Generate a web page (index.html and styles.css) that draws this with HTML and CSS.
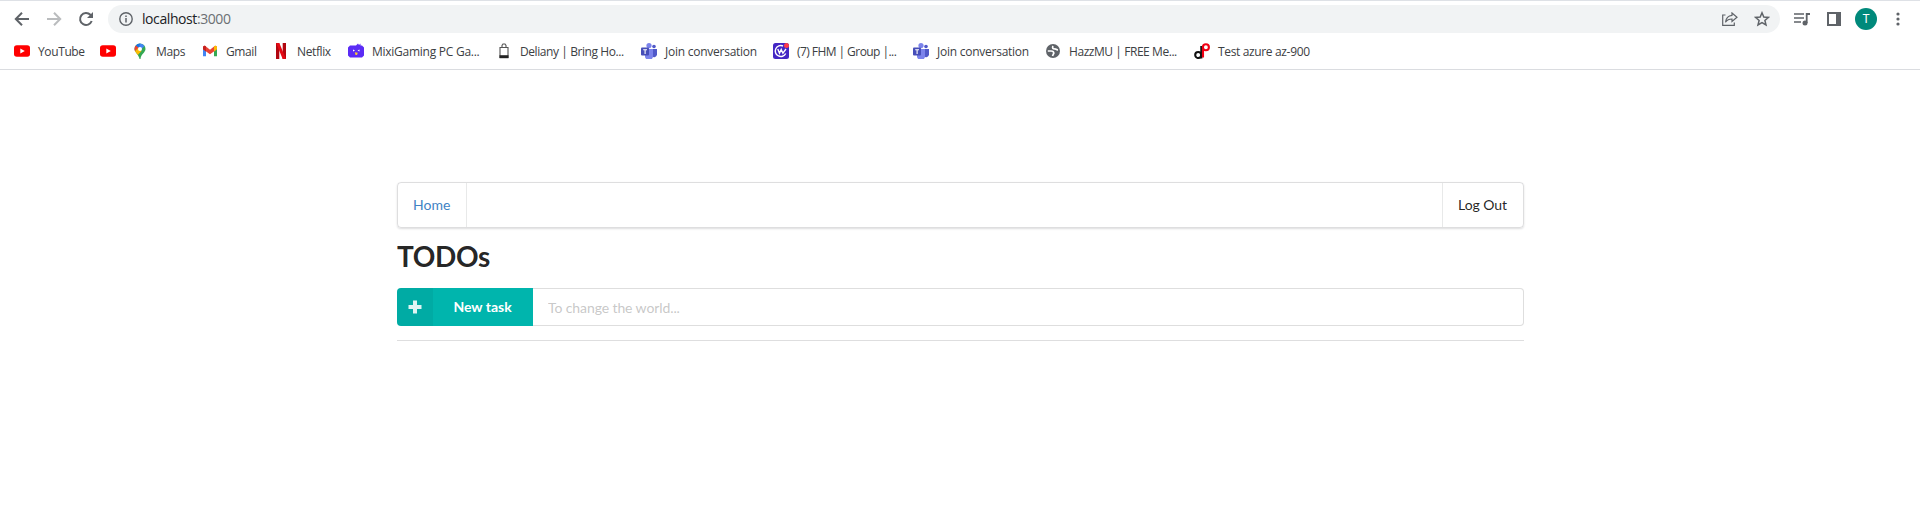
FILE: index.html
```html
<!DOCTYPE html>
<html lang="en">
<head>
<meta charset="utf-8">
<title>TODOs</title>
<link rel="stylesheet" href="styles.css">
</head>
<body>
<header class="browser">
  <div class="toolbar">
    <svg class="nav-icon" viewBox="0 0 16 16"><path d="M15 8H2M8 1.8 1.8 8 8 14.2" fill="none" stroke="#5f6368" stroke-width="2"/></svg>
    <svg class="nav-icon" viewBox="0 0 16 16"><path d="M1 8h13M8 1.8 14.2 8 8 14.2" fill="none" stroke="#babcbe" stroke-width="2"/></svg>
    <svg class="nav-icon" viewBox="0 0 16 16"><path d="M13.7 10A6 6 0 1 1 12.4 3.8L14 5.5" fill="none" stroke="#5f6368" stroke-width="2"/><path d="M15 1v6H9z" fill="#5f6368"/></svg>
    <div class="omnibox">
      <svg class="info" viewBox="0 0 14 14"><circle cx="7" cy="7" r="6.2" fill="none" stroke="#5f6368" stroke-width="1.4"/><path d="M7 6v4.5M7 3.4v1.5" stroke="#5f6368" stroke-width="1.5"/></svg>
      <span class="url">localhost<span class="port">:3000</span></span>
      <svg class="share" viewBox="0 0 16 14"><path d="M3.500 3H.7v10.300h11.600V10.500M10 1l5 4.200-5 4.300V7C7 7 5 8 3.500 10.200 4 6 6.500 3.600 10 3.300z" fill="none" stroke="#5f6368" stroke-width="1.2"/></svg>
      <svg class="star" viewBox="0 0 16 16"><path d="M8 1.8 9.800 6l4.600.4-3.500 3 1.100 4.500L8 11.500 4 13.900l1.100-4.500-3.500-3L6.200 6z" fill="none" stroke="#5f6368" stroke-width="1.5"/></svg>
    </div>
    <svg class="media" viewBox="0 0 16 14"><path d="M0 2h10M0 6h10M0 10h7" stroke="#5f6368" stroke-width="1.7"/><path d="M12.700 11V2H16" fill="none" stroke="#5f6368" stroke-width="1.8"/><circle cx="11" cy="11" r="2.5" fill="#5f6368"/></svg>
    <svg class="panel" viewBox="0 0 14 14"><path d="M0 0h14v14H0zM2 2v10h7V2z" fill="#5f6368" fill-rule="evenodd"/></svg>
    <span class="avatar">T</span>
    <svg class="dots" viewBox="0 0 4 14"><g fill="#5f6368"><circle cx="2" cy="2" r="1.6"/><circle cx="2" cy="7" r="1.6"/><circle cx="2" cy="12" r="1.6"/></g></svg>
  </div>
  <nav class="bookmarks">
    <a class="bm w86"><svg viewBox="0 0 16 16"><rect y="2.2" width="16" height="11.6" rx="2.8" fill="#f00"/><path d="m6.3 5.5 4.5 2.5-4.5 2.5z" fill="#fff"/></svg><span>YouTube</span></a>
    <a class="bm w32"><svg viewBox="0 0 16 16"><rect y="2.2" width="16" height="11.6" rx="2.8" fill="#f00"/><path d="m6.3 5.5 4.5 2.5-4.5 2.5z" fill="#fff"/></svg></a>
    <a class="bm w70"><svg viewBox="0 0 16 16"><path d="M2.500 6a5.500 5.500 0 0 1 11 0c0 3.500-4.500 5-5 10h-1C7 12 2.500 9 2.500 6z" fill="#34a853"/><path d="M6 9.500 12.500 3A5.500 5.500 0 0 0 8 .5L4 5z" fill="#4285f4"/><path d="M8 .5A5.500 5.500 0 0 0 3.800 2.500L7 5z" fill="#1a73e8"/><path d="M3.800 2.500A5.500 5.500 0 0 0 3 8.200L7 5z" fill="#ea4335"/><path d="M3 8.200 6.500 4.500 9.500 8l-3.700 4z" fill="#fbbc04"/><circle cx="8" cy="6" r="2" fill="#fff"/></svg><span>Maps</span></a>
    <a class="bm w71"><svg viewBox="0 0 16 16"><path d="M1 4v9.300h3V6z" fill="#4285f4"/><path d="M12 6v7.300h3V4z" fill="#34a853"/><path d="M1 3.500 3 2.700l5 4 5-4 2 .8v2.700l-7 5-7-5z" fill="#ea4335"/><path d="m12 3.500 1.500-.9L15 3.700v2.500l-3 2.200z" fill="#fbbc04"/><path d="M1 3.700v2.500l3 2.200V3.600L2.500 2.500z" fill="#c5221f"/></svg><span>Gmail</span></a>
    <a class="bm w75"><svg viewBox="0 0 16 16"><path d="M3 0h3.300v16H3zM9.700 0H13v16H9.700z" fill="#b1060f"/><path d="M3 0h3.300L13 16H9.700z" fill="#e50914"/></svg><span>Netflix</span></a>
    <a class="bm w148"><svg viewBox="0 0 16 16"><path d="M2 2.500h6l2-2 1 1.500 1.500-1.500v2H14l2 2v8l-2 2H2l-2-2v-8z" fill="#5b2cf5"/><path d="m5 6.500 2 1-2 1zM11.500 6.500l-2 1 2 1z" fill="#fff"/><path d="m6.800 9.300 3 .5L9 12H7.500z" fill="#ffcb2f"/></svg><span class="mixi">MixiGaming PC Ga...</span></a>
    <a class="bm w145"><svg viewBox="0 0 16 16"><path d="M4 4.500h8v10H4zM6 4.500v-2L7 1h2l1 1.500v2" fill="none" stroke="#555" stroke-width="1.1"/><path d="M3.500 12.200h9v3h-9z" fill="#222"/></svg><span class="deliany">Deliany | Bring Ho...</span></a>
    <a class="bm w132"><svg viewBox="0 0 16 16"><circle cx="8" cy="2.6" r="2.6" fill="#7b83eb"/><circle cx="13" cy="3.5" r="1.8" fill="#5059c9"/><path d="M10 6h6v5.500a3 3 0 0 1-5 2z" fill="#5059c9"/><path d="M4 6h8v6a4 4 0 0 1-8 2z" fill="#7b83eb"/><rect y="4.5" width="8" height="8" rx="1" fill="#464eb8"/><path d="M2.200 6.700H6M4.100 6.500V11" stroke="#fff" stroke-width="1.1"/></svg><span class="join">Join conversation</span></a>
    <a class="bm w140"><svg viewBox="0 0 16 16"><rect width="16" height="16" rx="2.5" fill="#4326c4"/><path d="M12.700 10.500A5.500 5.500 0 1 1 10 3M4.800 6l1.700 4.200L8.200 6.500l1.700 3.700L13 6" fill="none" stroke="#fff" stroke-width="1.4"/><circle cx="13.5" cy="2.5" r="2.5" fill="#ff3b4b"/></svg><span class="fhm">(7) FHM | Group |...</span></a>
    <a class="bm w132"><svg viewBox="0 0 16 16"><circle cx="8" cy="2.6" r="2.6" fill="#7b83eb"/><circle cx="13" cy="3.5" r="1.8" fill="#5059c9"/><path d="M10 6h6v5.500a3 3 0 0 1-5 2z" fill="#5059c9"/><path d="M4 6h8v6a4 4 0 0 1-8 2z" fill="#7b83eb"/><rect y="4.5" width="8" height="8" rx="1" fill="#464eb8"/><path d="M2.200 6.700H6M4.100 6.500V11" stroke="#fff" stroke-width="1.1"/></svg><span class="join">Join conversation</span></a>
    <a class="bm w149"><svg viewBox="0 0 16 16"><circle cx="8" cy="8" r="7" fill="#5f6368"/><path d="M2.800 8H6c2 0 2.800.6 2.800 2.200L7.500 13M8 3c-1 2 0 3 1.500 3 1.500-.3 1.500 1 3.500.8" fill="none" stroke="#fff" stroke-width="1.7"/></svg><span class="hazz">HazzMU | FREE Me...</span></a>
    <a class="bm"><svg viewBox="0 0 16 16"><g fill="none" stroke-width="2.1"><path d="M7.300 3v12.500" stroke="#111"/><circle cx="4.2" cy="12" r="3" stroke="#111"/><path d="M9 14.500V4.500" stroke="#f00014"/><circle cx="11.9" cy="4.3" r="3" stroke="#f00014"/></g></svg><span class="azure">Test azure az-900</span></a>
  </nav>
</header>
<main class="container">
  <nav class="menu">
    <a class="item home">Home</a>
    <a class="item logout">Log Out</a>
  </nav>
  <h1 class="title">TODOs</h1>
  <div class="task-input">
    <button class="add"><span class="plus"><svg viewBox="0 0 14 14"><path d="M5 .5h4V5h4.500v4H9v4.500H5V9H.5V5H5z" fill="#fff" fill-opacity=".87"/></svg></span><span class="add-label">New task</span></button>
    <input class="field" type="text" placeholder="To change the world...">
  </div>
  <div class="divider"></div>
</main>
</body>
</html>
```
FILE: styles.css
```css
* { box-sizing: border-box; }
body { margin: 0; background: #fff; font-family: Lato, sans-serif; font-size: 14px; color: rgba(0,0,0,.87); }
svg { display: block; flex: none; }

.browser { height: 70px; border-top: 1px solid #dee1e6; border-bottom: 1px solid #dadce0; font-family: "Open Sans", sans-serif; }
.toolbar { display: flex; align-items: center; height: 36px; padding: 0 18px 0 14px; }
.nav-icon { width: 16px; height: 16px; margin-right: 16px; }
.omnibox { display: flex; align-items: center; width: 1672px; height: 28px; margin-left: -2px; padding: 0 10px 0 11px; border-radius: 14px; background: #f1f3f4; }
.info { width: 14px; height: 14px; }
.url { flex: 1; margin: -1px 0 0 9px; font-size: 14px; letter-spacing: -.42px; color: #202124; }
.port { color: #6b6f73; }
.share { width: 16px; height: 14px; margin-right: 16px; }
.star { width: 16px; height: 16px; }
.media { width: 16px; height: 14px; margin-left: 14px; }
.panel { width: 14px; height: 14px; margin-left: 17px; }
.avatar { width: 22px; height: 22px; margin-left: 14px; border-radius: 50%; background: #00897b; color: #fff; font: 12px/22px Roboto, sans-serif; text-align: center; }
.dots { width: 4px; height: 14px; margin-left: 19px; }

.bookmarks { display: flex; align-items: center; height: 28px; padding-left: 14px; font-size: 12px; color: #3c4043; }
.bm { display: flex; align-items: center; gap: 8px; white-space: nowrap; }
.bm svg { width: 16px; height: 16px; }
.w32 { width: 32px; }
.w70 { width: 70px; }
.w71 { width: 71px; }
.w75 { width: 75px; }
.w86 { width: 86px; }
.w132 { width: 132px; }
.w140 { width: 140px; }
.w145 { width: 145px; }
.w148 { width: 148px; }
.w149 { width: 149px; }
.bm span { letter-spacing: -.38px; }
.bm .mixi { letter-spacing: -.26px; }
.bm .deliany { letter-spacing: -.42px; }
.bm .join { letter-spacing: -.25px; }
.bm .fhm { letter-spacing: -.56px; }
.bm .hazz { letter-spacing: -.44px; }
.bm .azure { letter-spacing: -.35px; }

.container { width: 1127px; margin: 112px 0 0 397px; }
.menu { display: flex; justify-content: space-between; height: 46px; border: 1px solid rgba(34,36,38,.15); border-radius: 4px; box-shadow: 0 1px 2px 0 rgba(34,36,38,.15); }
.item { display: flex; align-items: center; padding: 0 15px; line-height: 14px; white-space: nowrap; }
.home { width: 69px; border-right: 1px solid rgba(34,36,38,.1); color: #4183c4; }
.logout { width: 81px; border-left: 1px solid rgba(34,36,38,.1); letter-spacing: -.05px; }
.title { margin: 10px 0 14px; font-size: 28px; line-height: 36px; font-weight: 700; letter-spacing: -.35px; }
.task-input { display: flex; height: 38px; }
.add { display: flex; width: 136px; padding: 0; border: 0; border-radius: 4px 0 0 4px; overflow: hidden; background: #00b5ad; color: #fff; font: 700 14px/38px Lato, sans-serif; }
.plus { display: flex; align-items: center; justify-content: center; width: 36px; height: 38px; background: rgba(0,0,0,.05); }
.plus svg { width: 14px; height: 14px; margin-right: 1px; }
.add-label { flex: 1; padding-right: 1px; text-align: center; }
.field { flex: 1; padding: 0 14px 0 15px; border: 1px solid rgba(34,36,38,.15); border-left: 0; border-radius: 0 4px 4px 0; font: 14px Lato, sans-serif; letter-spacing: -.1px; outline: 0; }
.field::placeholder { color: rgba(191,191,191,.87); }
.divider { height: 1px; margin-top: 14px; background: rgba(34,36,38,.15); }
```
